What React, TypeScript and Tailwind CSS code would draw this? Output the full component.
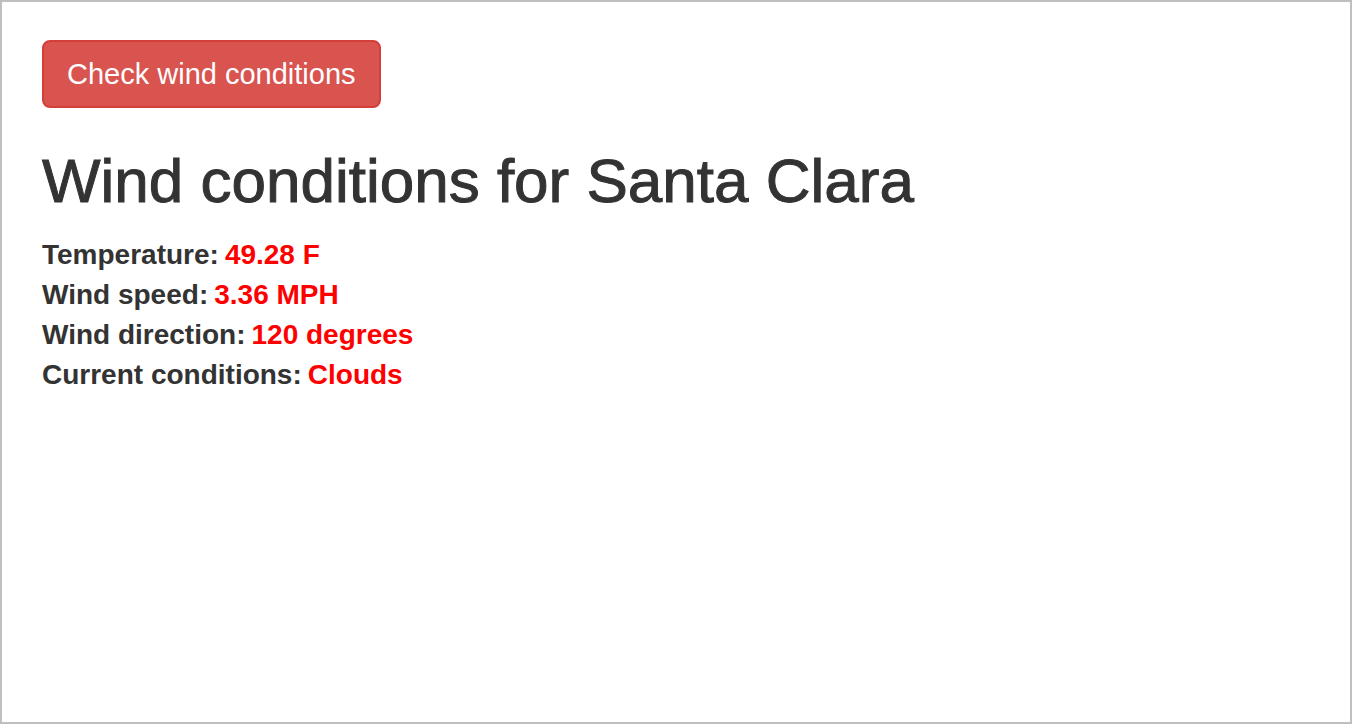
const readings = [
  { label: 'Temperature', value: '49.28 F' },
  { label: 'Wind speed', value: '3.36 MPH' },
  { label: 'Wind direction', value: '120 degrees' },
  { label: 'Current conditions', value: 'Clouds' },
];

export default function App() {
  return (
    <main className="min-h-screen border-2 border-[#bfbfbf] bg-white px-10 pt-[38px] pb-10 font-['Liberation_Sans',Arial,sans-serif] text-[28px] leading-[40px] text-[#333333]">
      <button
        type="button"
        className="block cursor-pointer rounded-lg border-2 border-[#d43f3a] bg-[#d9534f] px-[23px] py-3 text-[29px] text-white"
      >
        Check wind conditions
      </button>
      <h1 className="mt-10 mb-[21px] text-[62px] leading-[66px] font-normal [-webkit-text-stroke:1px_#333333]">
        Wind conditions for Santa Clara
      </h1>
      <dl className="font-bold">
        {readings.map(({ label, value }) => (
          <div key={label} className="flex gap-1.5">
            <dt>{label}:</dt>
            <dd className="text-[#ff0000]">{value}</dd>
          </div>
        ))}
      </dl>
    </main>
  );
}
